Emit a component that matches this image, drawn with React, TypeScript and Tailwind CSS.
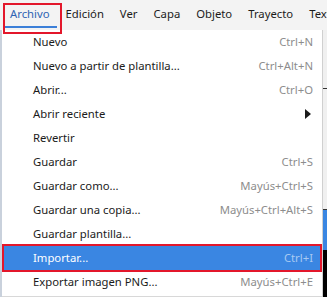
import React from "react";

const bar = ["Archivo", "Edición", "Ver", "Capa", "Objeto", "Trayecto", "Texto"];

type Item = { label: string; sc?: string; arrow?: boolean; active?: boolean };
const items: Item[] = [
  { label: "Nuevo", sc: "Ctrl+N" },
  { label: "Nuevo a partir de plantilla...", sc: "Ctrl+Alt+N" },
  { label: "Abrir...", sc: "Ctrl+O" },
  { label: "Abrir reciente", arrow: true },
  { label: "Revertir" },
  { label: "Guardar", sc: "Ctrl+S" },
  { label: "Guardar como...", sc: "Mayús+Ctrl+S" },
  { label: "Guardar una copia...", sc: "Mayús+Ctrl+Alt+S" },
  { label: "Guardar plantilla..." },
  { label: "Importar...", sc: "Ctrl+I", active: true },
  { label: "Exportar imagen PNG...", sc: "Mayús+Ctrl+E" },
];

export default function App() {
  return (
    <div
      className="relative w-[327px] h-[297px] overflow-hidden bg-[#f0f0f0] text-[11.3px]"
      style={{ fontFamily: '"Noto Sans", "Open Sans", sans-serif' }}
    >
      <div className="h-[30px] flex items-stretch bg-[#f3f3f3] pl-[2px] whitespace-nowrap">
        {bar.map((b, i) => (
          <div
            key={b}
            className={`relative flex items-center px-[8px] pb-[1px] ${i === 0 ? "text-[#2f63b3]" : "text-[#1b1b1b]"}`}
          >
            {b}
            {i === 0 && <span className="absolute left-[3px] right-[1px] top-[26px] h-[2px] bg-[#3b7fd8]" />}
          </div>
        ))}
      </div>
      <div className="flex h-[267px]">
        <div className="w-[2px] bg-[#c9d1dc]" />
        <div className="w-[321px] bg-white border-r border-[#d0d0d0] flex flex-col">
          {items.map((it) => (
            <div
              key={it.label}
              className={`relative h-[24px] shrink-0 flex items-center justify-between pl-[31px] pr-[9px] ${
                it.active ? "bg-[#3a86e2] text-white" : "text-[#1b1b1b]"
              }`}
            >
              <span>{it.label}</span>
              {it.sc && (
                <span className={it.active ? "text-[#a8c9f2]" : "text-[#8d8d8d]"}>{it.sc}</span>
              )}
              {it.arrow && (
                <svg width="6" height="10" viewBox="0 0 6 10" className="mr-[2px]">
                  <path d="M0 0 L6 5 L0 10 Z" fill="#1b1b1b" />
                </svg>
              )}
              {it.active && <span className="absolute inset-y-[-2px] left-0 right-0 border-2 border-[#e3172b]" />}
            </div>
          ))}
          <div className="h-[1px] bg-[#d8d8d8] mt-auto" />
        </div>
        <div className="flex-1 flex flex-col">
          <div className="h-[58px] bg-[#f0f0f0]" />
          <div className="h-[1px] bg-[#333]" />
          <div className="h-[120px] bg-[#f0f0f0]" />
          <div className="h-[1px] bg-[#333]" />
          <div className="h-[40px] bg-[#3a86e2]" />
          <div className="flex-1 bg-black" />
        </div>
      </div>
      <div className="absolute left-[3px] top-[3px] w-[59px] h-[31px] border-2 border-[#e3172b]" />
    </div>
  );
}
